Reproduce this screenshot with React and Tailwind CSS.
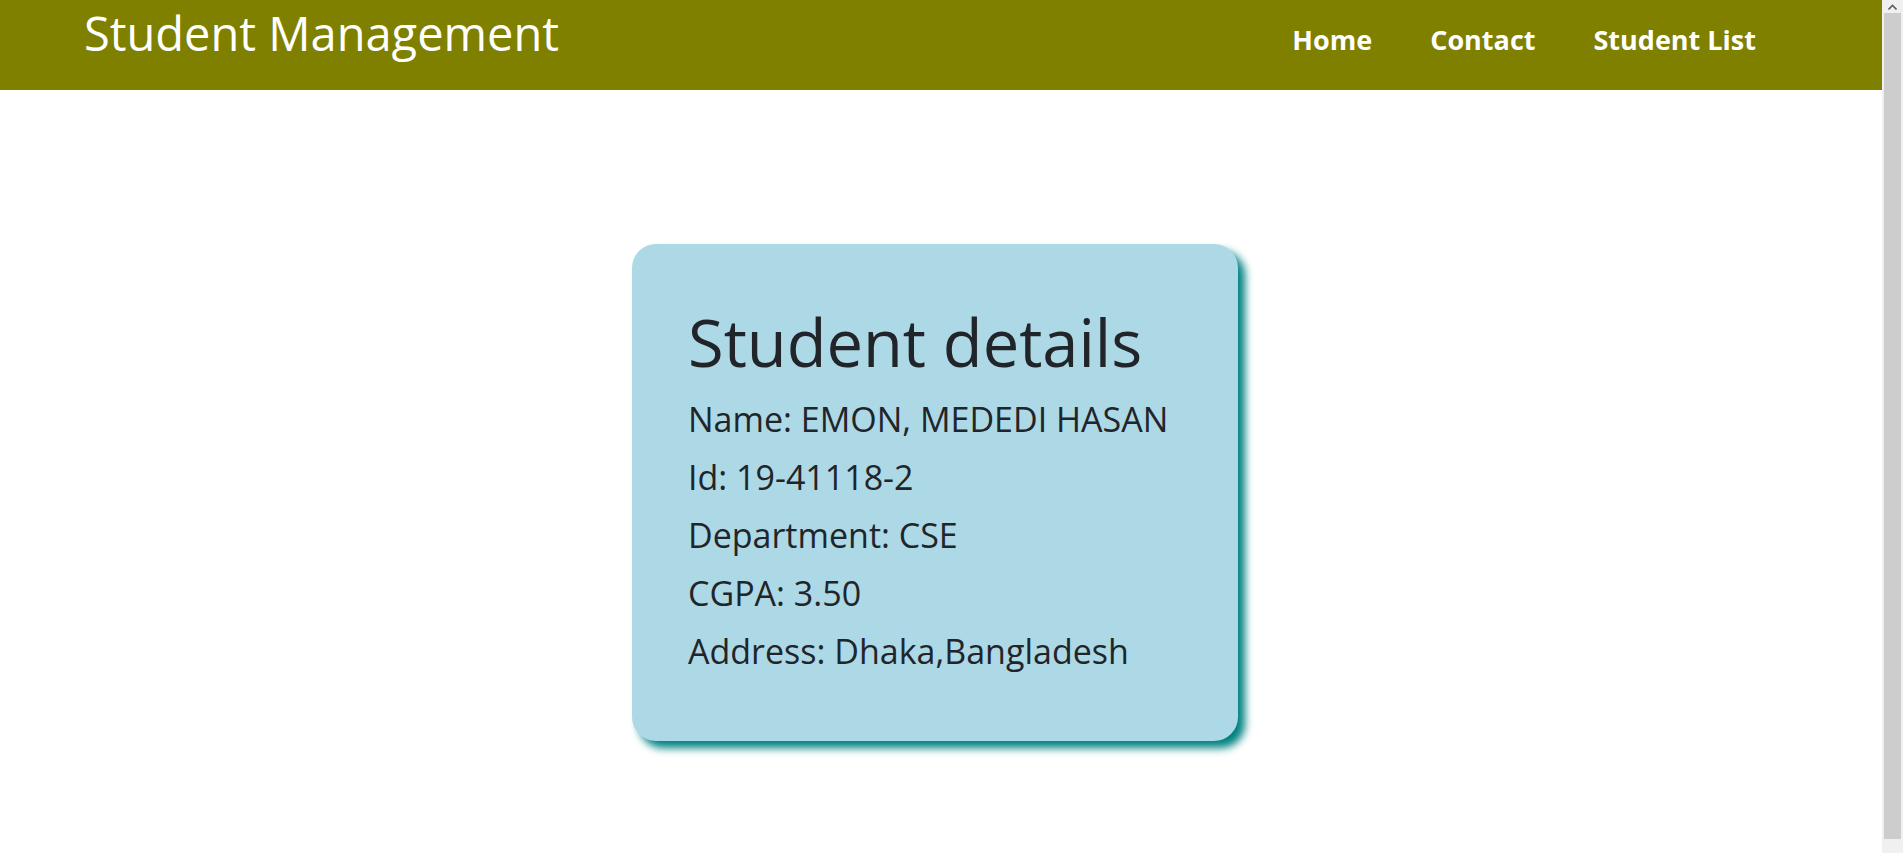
import React from "react";

const student = {
  name: "EMON, MEDEDI HASAN",
  id: "19-41118-2",
  department: "CSE",
  cgpa: "3.50",
  address: "Dhaka,Bangladesh",
};

function Navbar() {
  return (
    <header className="h-[90px] bg-[#808000] flex items-start justify-between pl-[84px] pr-[126px]">
      <a className="mt-[10px] text-[47px] leading-[47px] text-white font-normal">
        Student Management
      </a>
      <nav className="mt-[26px] flex gap-[58px] text-[27px] leading-[27px] font-bold text-white">
        <a>Home</a>
        <a>Contact</a>
        <a>Student List</a>
      </nav>
    </header>
  );
}

function StudentCard({ s }) {
  const rows = [
    ["Name", s.name],
    ["Id", s.id],
    ["Department", s.department],
    ["CGPA", s.cgpa],
    ["Address", s.address],
  ];
  return (
    <div className="w-[606px] bg-[#add8e6] rounded-[24px] shadow-[7px_7px_8px_#008080] pl-[56px] pt-[64px] pb-[61px] text-[#212529]">
      <h1 className="text-[65px] leading-[68px] font-normal mb-[14px]">Student details</h1>
      {rows.map(([label, value]) => (
        <p key={label} className="text-[34px] leading-[58px]">
          {label}: {value}
        </p>
      ))}
    </div>
  );
}

export default function App() {
  return (
    <div className="min-h-screen bg-white font-['Open_Sans',sans-serif] mr-[21px]">
      <Navbar />
      <main className="flex justify-center pr-[12px] pt-[154px]">
        <StudentCard s={student} />
      </main>
      {/* fake browser scrollbar */}
      <div className="fixed top-0 right-0 h-screen w-[21px] bg-[#f0f0f0] flex flex-col">
        <div className="h-[13px] flex items-center justify-center">
          <svg width="9" height="6" viewBox="0 0 9 6">
            <path d="M0.5 5.5 L4.5 1.5 L8.5 5.5" stroke="#606060" strokeWidth="1.6" fill="none" />
          </svg>
        </div>
        <div className="flex-1 mx-[2px] bg-[#cdcdcd] mb-[14px]" />
      </div>
    </div>
  );
}
